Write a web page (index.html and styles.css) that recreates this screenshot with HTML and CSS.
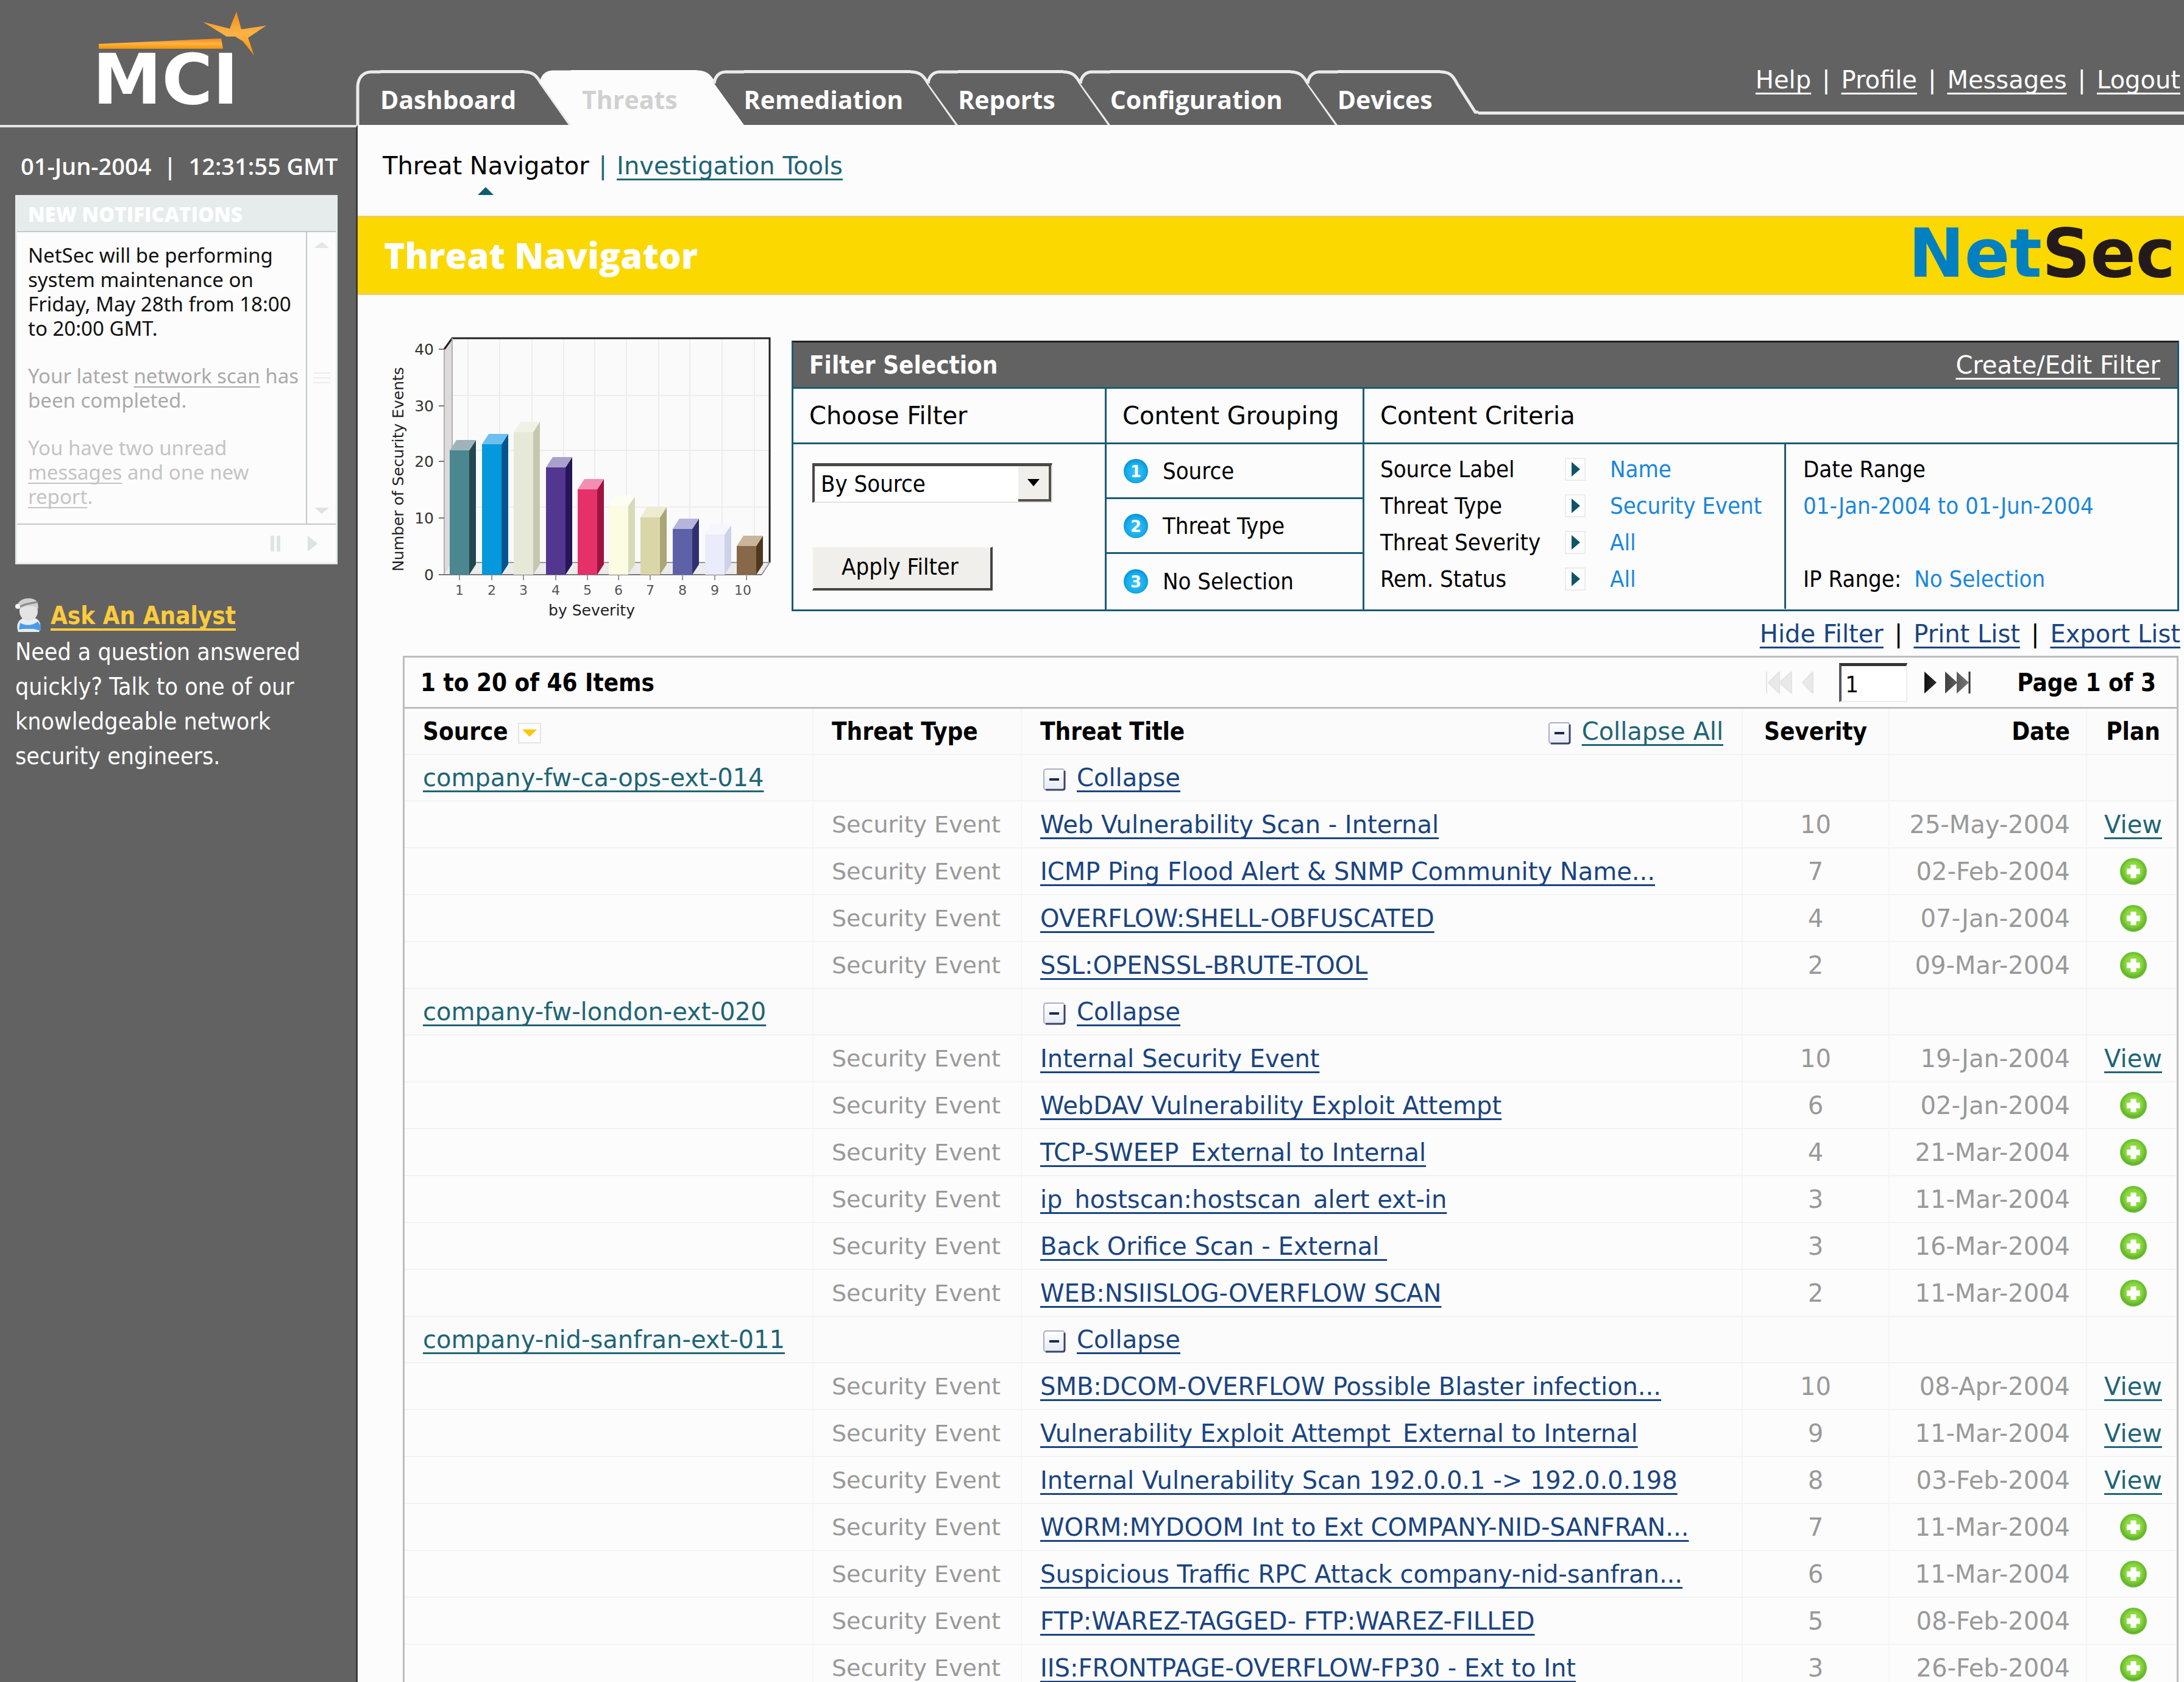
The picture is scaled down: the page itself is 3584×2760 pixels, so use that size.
FILE: index.html
```html
<!DOCTYPE html>
<html lang="en">
<head>
  <meta charset="UTF-8">
  <meta name="viewport" content="width=device-width, initial-scale=1.0">
  <title>Threat Navigator - NetSec</title>
  <link rel="stylesheet" href="styles.css">
</head>

<body>

  <!-- shared icons -->
  <svg class="sprite" width="0" height="0" aria-hidden="true">
    <defs>
      <linearGradient id="gold" x1="0" y1="0" x2="0" y2="1">
        <stop offset="0" stop-color="#f08a10"/>
        <stop offset="0.5" stop-color="#ffb347"/>
        <stop offset="1" stop-color="#f79400"/>
      </linearGradient>
      <linearGradient id="box" x1="0" y1="0" x2="0" y2="1">
        <stop offset="0" stop-color="#ffffff"/>
        <stop offset="1" stop-color="#e6eaf5"/>
      </linearGradient>
      <radialGradient id="green" cx="0.5" cy="0.45" r="0.55">
        <stop offset="0" stop-color="#a8e85a"/>
        <stop offset="0.6" stop-color="#86d63a"/>
        <stop offset="1" stop-color="#58a828"/>
      </radialGradient>
      <radialGradient id="blue" cx="0.5" cy="0.55" r="0.55">
        <stop offset="0" stop-color="#3fc4f5"/>
        <stop offset="0.7" stop-color="#14acec"/>
        <stop offset="1" stop-color="#0a8fd0"/>
      </radialGradient>
      <linearGradient id="dark" x1="0" y1="0" x2="1" y2="0">
        <stop offset="0" stop-color="#111"/>
        <stop offset="1" stop-color="#777"/>
      </linearGradient>
    </defs>
    <symbol id="tab-left" viewBox="0 0 52 90">
      <path class="tab-fill" d="M3 22C4 12 10 3 22 3H52V90Z"/>
      <path class="tab-line" d="M3 22C4 12 10 3 22 3H52"/>
    </symbol>
    <symbol id="tab-right" viewBox="0 0 77 90">
      <path class="tab-fill" d="M0 3C14 3 20 8 28 22L76 90H0Z"/>
      <path class="tab-line" d="M0 3C14 3 20 8 28 22L76 90"/>
    </symbol>
    <symbol id="minus" viewBox="0 0 38 38">
      <rect x="2" y="2" width="34" height="34" rx="4" fill="url(#box)" stroke="#a9aec4" stroke-width="2"/>
      <path d="M36 5V33Q36 36 33 36H5" fill="none" stroke="#3a4468" stroke-width="3"/>
      <path d="M11 19H27" stroke="#1b2a55" stroke-width="4"/>
    </symbol>
    <symbol id="plus" viewBox="0 0 44 44">
      <circle cx="22" cy="22" r="21" fill="url(#green)" stroke="#6cbf35" stroke-width="2"/>
      <path d="M22 11V33M11 22H33" stroke="#fff" stroke-width="9"/>
    </symbol>
    <symbol id="arrow" viewBox="0 0 34 38">
      <rect x="1" y="1" width="32" height="36" fill="#fdfdfd" stroke="#ececec" stroke-width="2"/>
      <path d="M11 7L25 19L11 31Z" fill="#0f5468"/>
    </symbol>
  </svg>

  <header class="top">
    <a class="logo" href="#" aria-label="MCI home">
      <svg width="300" height="200" viewBox="150 0 300 200">
        <path d="M162 72L363 63L366 80H162Z" fill="url(#gold)"/>
        <path d="M388 19L396 48L437 42L407 62L417 91L399 68L386 60L372 60L333 36L377 47Z" fill="url(#gold)"/>
        <text class="logo-text" x="152" y="170">MCI</text>
      </svg>
    </a>
    <nav class="tabs">
      <a class="tab first" href="#">
        <svg width="40" height="90" viewBox="0 0 40 90"><path class="tab-line" d="M3 90V26C4 12 12 3 26 3H40"/></svg>
        <span class="tab-label">Dashboard</span>
        <svg width="77" height="90"><use href="#tab-right"/></svg>
      </a>
      <a class="tab active" href="#">
        <svg width="52" height="90"><use href="#tab-left"/></svg>
        <span class="tab-label">Threats</span>
        <svg width="77" height="90"><use href="#tab-right"/></svg>
      </a>
      <a class="tab" href="#">
        <svg width="52" height="90"><use href="#tab-left"/></svg>
        <span class="tab-label">Remediation</span>
        <svg width="77" height="90"><use href="#tab-right"/></svg>
      </a>
      <a class="tab" href="#">
        <svg width="52" height="90"><use href="#tab-left"/></svg>
        <span class="tab-label">Reports</span>
        <svg width="77" height="90"><use href="#tab-right"/></svg>
      </a>
      <a class="tab" href="#">
        <svg width="52" height="90"><use href="#tab-left"/></svg>
        <span class="tab-label">Configuration</span>
        <svg width="77" height="90"><use href="#tab-right"/></svg>
      </a>
      <a class="tab last" href="#">
        <svg width="52" height="90"><use href="#tab-left"/></svg>
        <span class="tab-label">Devices</span>
        <svg width="62" height="90" viewBox="0 0 62 90"><path class="tab-line" d="M0 3C14 3 20 8 27 22L57 69H62"/></svg>
      </a>
      <div class="user-links">
        <a href="#">Help</a><span>|</span><a href="#">Profile</a><span>|</span><a href="#">Messages</a><span>|</span><a href="#">Logout</a>
      </div>
    </nav>
  </header>

  <div class="page">

    <aside class="sidebar">
      <p class="clock"><span>01-Jun-2004</span><span>|</span><span>12:31:55 GMT</span></p>

      <section class="notes">
        <h2>NEW NOTIFICATIONS</h2>
        <div class="notes-body">
          <div class="notes-text">
            <p class="fresh">NetSec will be performing system maintenance on Friday, May 28th from 18:00 to&nbsp;20:00 GMT.</p>
            <p>Your latest <a href="#">network scan</a> has been completed.</p>
            <p class="old">You have two unread <a href="#">messages</a> and one new <a href="#">report</a>.</p>
          </div>
          <div class="notes-scroll">
            <svg width="24" height="10" viewBox="0 0 24 10"><path d="M12 0L24 10H0Z" fill="#e2e6e6"/></svg>
            <svg width="28" height="18" viewBox="0 0 28 18"><path d="M0 1H28M0 9H28M0 17H28" stroke="#ececec" stroke-width="2"/></svg>
            <svg width="24" height="10" viewBox="0 0 24 10"><path d="M0 0H24L12 10Z" fill="#dde4e2"/></svg>
          </div>
        </div>
        <div class="notes-foot">
          <svg width="18" height="26" viewBox="0 0 18 26"><path d="M4 0V26M14 0V26" stroke="#dfe4e6" stroke-width="6"/></svg>
          <svg width="16" height="26" viewBox="0 0 16 26"><path d="M0 0L16 13L0 26Z" fill="#dbe3e3"/></svg>
        </div>
      </section>

      <section class="ask">
        <h2>
          <svg width="44" height="58" viewBox="0 0 44 58">
            <path d="M5 56C1 46 4 36 14 33H32C41 36 44 46 39 56Z" fill="#e8eef4"/>
            <path d="M8 41C16 46 28 46 37 39L42 46V54L30 51H12L6 52Z" fill="#4d9be8"/>
            <ellipse cx="22" cy="22" rx="15" ry="16" fill="#e4e4e2"/>
            <path d="M4 10C10 -2 32 -2 37 8L38 18C28 10 14 14 6 18Z" fill="#cfcfd0"/>
            <path d="M5 16C14 10 24 9 36 7" stroke="#8a8a8c" stroke-width="3" fill="none"/>
            <circle cx="4" cy="14" r="4" fill="#f4f4f4"/>
          </svg>
          <a href="#">Ask An Analyst</a>
        </h2>
        <p>Need a question answered quickly? Talk to one of our knowledgeable network security engineers.</p>
      </section>
    </aside>

    <main class="main">
      <nav class="subnav">
        <a class="current" href="#">Threat Navigator</a><span>|</span><a href="#">Investigation Tools</a>
      </nav>

      <div class="banner">
        <h1>Threat Navigator</h1>
        <div class="netsec"><span>Net</span>Sec</div>
      </div>

      <div class="overview">
        <svg class="chart" width="659" height="480" viewBox="640 540 659 480" role="img" aria-label="Number of Security Events by Severity">
          <path d="M742 555H1263V923H742Z" fill="#fafafa"/>
          <path d="M729 573L742 555V923L729 943Z" fill="#dcdadb"/>
          <path d="M729 943L742 923H1263L1250 943Z" fill="#ececec"/>
          <path d="M742 649H1263M742 739H1263M742 832H1263M768 555V923M820 555V923M873 555V923M925 555V923M976 555V923M1028 555V923M1081 555V923M1132 555V923M1185 555V923M1238 555V923" stroke="#ededed" stroke-width="2" fill="none"/>
          <path d="M729 573L742 555H1263V923" fill="none" stroke="#222" stroke-width="3"/>
          <path d="M1263 923H742M1263 923L1250 943" fill="none" stroke="#999" stroke-width="2"/>
          <path d="M742 555V923M729 573V943" stroke="#b5b0b2" stroke-width="2"/>
          <path d="M720 573H729M720 666H729M720 757H729M720 850H729M720 943H1250" stroke="#777" stroke-width="2"/>
          <path d="M754 943V952M807 943V952M859 943V952M912 943V952M964 943V952M1015 943V952M1067 943V952M1120 943V952M1173 943V952M1225 943V952" stroke="#999" stroke-width="2"/>

          <path d="M770 739L781 722V926L770 943Z" fill="#24474f"/><path d="M738 739L749 722H781L770 739Z" fill="#9fb4b8"/><path d="M738 739H770V943H738Z" fill="#4a8790"/>
          <path d="M823 729L834 712V926L823 943Z" fill="#03558f"/><path d="M791 729L802 712H834L823 729Z" fill="#6cc0ee"/><path d="M791 729H823V943H791Z" fill="#0698dc"/>
          <path d="M875 709L886 692V926L875 943Z" fill="#c6c8ae"/><path d="M843 709L854 692H886L875 709Z" fill="#f1f2e6"/><path d="M843 709H875V943H843Z" fill="#e7e9d8"/>
          <path d="M928 767L939 750V926L928 943Z" fill="#261558"/><path d="M896 767L907 750H939L928 767Z" fill="#a9a0cb"/><path d="M896 767H928V943H896Z" fill="#52368f"/>
          <path d="M980 803L991 786V926L980 943Z" fill="#a01340"/><path d="M948 803L959 786H991L980 803Z" fill="#f28fb0"/><path d="M948 803H980V943H948Z" fill="#e5316a"/>
          <path d="M1031 830L1042 815V926L1031 943Z" fill="#d9dab8"/><path d="M999 830L1010 813H1042L1031 830Z" fill="#fdfdf4"/><path d="M999 830H1031V943H999Z" fill="#fbfce2"/>
          <path d="M1083 849L1094 832V926L1083 943Z" fill="#a9a577"/><path d="M1051 849L1062 832H1094L1083 849Z" fill="#edecd0"/><path d="M1051 849H1083V943H1051Z" fill="#dad6a8"/>
          <path d="M1136 868L1147 851V926L1136 943Z" fill="#2f3070"/><path d="M1104 868L1115 851H1147L1136 868Z" fill="#b4b4dc"/><path d="M1104 868H1136V943H1104Z" fill="#5e61a8"/>
          <path d="M1189 877L1200 862V926L1189 943Z" fill="#cfd0ea"/><path d="M1157 877L1168 860H1200L1189 877Z" fill="#f6f6fe"/><path d="M1157 877H1189V943H1157Z" fill="#eaebfb"/>
          <path d="M1241 896L1252 879V926L1241 943Z" fill="#4d371f"/><path d="M1209 896L1220 879H1252L1241 896Z" fill="#c8b59a"/><path d="M1209 896H1241V943H1209Z" fill="#876848"/>

          <g class="axis-y">
            <text x="712" y="582">40</text><text x="712" y="675">30</text><text x="712" y="766">20</text><text x="712" y="859">10</text><text x="712" y="952">0</text>
          </g>
          <g class="axis-x">
            <text x="754" y="976">1</text><text x="807" y="976">2</text><text x="859" y="976">3</text><text x="912" y="976">4</text><text x="964" y="976">5</text>
            <text x="1015" y="976">6</text><text x="1067" y="976">7</text><text x="1120" y="976">8</text><text x="1173" y="976">9</text><text x="1219" y="976">10</text>
            <text class="axis-title" x="971" y="1010">by Severity</text>
            <text class="axis-title" transform="translate(662 770) rotate(-90)">Number of Security Events</text>
          </g>
        </svg>

        <section class="filter">
          <div class="filter-head">
            <h2>Filter Selection</h2>
            <a href="#">Create/Edit Filter</a>
          </div>
          <div class="filter-grid">
            <div class="col choose">
              <h3><label for="filter-by">Choose Filter</label></h3>
              <form class="choose-form">
                <div class="select-wrap">
                  <select id="filter-by"><option>By Source</option><option>By Severity</option></select>
                  <span class="select-arrow"><svg width="20" height="12" viewBox="0 0 20 12"><path d="M0 0H20L10 12Z"/></svg></span>
                </div>
                <button type="button">Apply Filter</button>
              </form>
            </div>
            <div class="col grouping">
              <h3>Content Grouping</h3>
              <ol>
                <li><span class="num"><svg width="40" height="40" viewBox="0 0 40 40"><circle cx="20" cy="20" r="20" fill="url(#blue)"/><text x="20" y="30">1</text></svg></span>Source</li>
                <li><span class="num"><svg width="40" height="40" viewBox="0 0 40 40"><circle cx="20" cy="20" r="20" fill="url(#blue)"/><text x="20" y="30">2</text></svg></span>Threat Type</li>
                <li><span class="num"><svg width="40" height="40" viewBox="0 0 40 40"><circle cx="20" cy="20" r="20" fill="url(#blue)"/><text x="20" y="30">3</text></svg></span>No Selection</li>
              </ol>
            </div>
            <div class="col criteria">
              <h3>Content Criteria</h3>
              <div class="criteria-body">
                <dl class="criteria-list">
                  <dt>Source Label</dt><dd><svg width="34" height="38"><use href="#arrow"/></svg>Name</dd>
                  <dt>Threat Type</dt><dd><svg width="34" height="38"><use href="#arrow"/></svg>Security Event</dd>
                  <dt>Threat Severity</dt><dd><svg width="34" height="38"><use href="#arrow"/></svg>All</dd>
                  <dt>Rem. Status</dt><dd><svg width="34" height="38"><use href="#arrow"/></svg>All</dd>
                </dl>
                <div class="ranges">
                  <div>Date Range<br><span class="value">01-Jan-2004 to 01-Jun-2004</span></div>
                  <div>IP Range: <span class="value">No Selection</span></div>
                </div>
              </div>
            </div>
          </div>
        </section>
      </div>

      <div class="actions">
        <a href="#">Hide Filter</a><span>|</span><a href="#">Print List</a><span>|</span><a href="#">Export List</a>
      </div>

      <section class="list">
        <div class="list-head">
          <h2>1 to 20 of 46 Items</h2>
          <div class="pager">
            <svg width="78" height="36" viewBox="0 0 78 36"><path d="M1 0V36M22 0L4 18L22 36ZM42 0L22 18L42 36ZM77 0L60 18L77 36Z" fill="#e9e9e9" stroke="#e4e4e4" stroke-width="2"/></svg>
            <input type="text" value="1" aria-label="Page number">
            <svg width="76" height="36" viewBox="0 0 76 36"><path d="M0 0L20 18L0 36ZM34 0L54 18L34 36ZM53 0L73 18L53 36Z" fill="url(#dark)"/><path d="M74 0V36" stroke="#333" stroke-width="3"/></svg>
            <strong>Page 1 of 3</strong>
          </div>
        </div>

        <table>
          <colgroup>
            <col class="c-source"><col class="c-type"><col><col class="c-severity"><col class="c-date"><col class="c-plan">
          </colgroup>
          <thead>
            <tr>
              <th>Source <svg class="sort" width="38" height="34" viewBox="0 0 38 34"><rect x="1" y="1" width="36" height="32" fill="#fdfdfd" stroke="#e4e6ee" stroke-width="2"/><path d="M7 11H31L19 23Z" fill="#fdc70c"/></svg></th>
              <th>Threat Type</th>
              <th><div class="title-head">Threat Title <span><svg width="38" height="38"><use href="#minus"/></svg><a class="teal" href="#">Collapse All</a></span></div></th>
              <th class="severity">Severity</th>
              <th class="date">Date</th>
              <th class="plan">Plan</th>
            </tr>
          </thead>
          <tbody>
            <tr class="group"><td><a class="teal" href="#">company-fw-ca-ops-ext-014</a></td><td></td><td><svg width="38" height="38"><use href="#minus"/></svg><a href="#">Collapse</a></td><td></td><td></td><td></td></tr>
            <tr><td></td><td class="type">Security Event</td><td><a href="#">Web Vulnerability Scan - Internal</a></td><td class="severity">10</td><td class="date">25-May-2004</td><td class="plan"><a class="teal" href="#">View</a></td></tr>
            <tr><td></td><td class="type">Security Event</td><td><a href="#">ICMP Ping Flood Alert &amp; SNMP Community Name...</a></td><td class="severity">7</td><td class="date">02-Feb-2004</td><td class="plan"><a href="#" aria-label="Add plan"><svg width="44" height="44"><use href="#plus"/></svg></a></td></tr>
            <tr><td></td><td class="type">Security Event</td><td><a href="#">OVERFLOW:SHELL-OBFUSCATED</a></td><td class="severity">4</td><td class="date">07-Jan-2004</td><td class="plan"><a href="#" aria-label="Add plan"><svg width="44" height="44"><use href="#plus"/></svg></a></td></tr>
            <tr><td></td><td class="type">Security Event</td><td><a href="#">SSL:OPENSSL-BRUTE-TOOL</a></td><td class="severity">2</td><td class="date">09-Mar-2004</td><td class="plan"><a href="#" aria-label="Add plan"><svg width="44" height="44"><use href="#plus"/></svg></a></td></tr>

            <tr class="group"><td><a class="teal" href="#">company-fw-london-ext-020</a></td><td></td><td><svg width="38" height="38"><use href="#minus"/></svg><a href="#">Collapse</a></td><td></td><td></td><td></td></tr>
            <tr><td></td><td class="type">Security Event</td><td><a href="#">Internal Security Event</a></td><td class="severity">10</td><td class="date">19-Jan-2004</td><td class="plan"><a class="teal" href="#">View</a></td></tr>
            <tr><td></td><td class="type">Security Event</td><td><a href="#">WebDAV Vulnerability Exploit Attempt</a></td><td class="severity">6</td><td class="date">02-Jan-2004</td><td class="plan"><a href="#" aria-label="Add plan"><svg width="44" height="44"><use href="#plus"/></svg></a></td></tr>
            <tr><td></td><td class="type">Security Event</td><td><a href="#">TCP-SWEEP_External to Internal</a></td><td class="severity">4</td><td class="date">21-Mar-2004</td><td class="plan"><a href="#" aria-label="Add plan"><svg width="44" height="44"><use href="#plus"/></svg></a></td></tr>
            <tr><td></td><td class="type">Security Event</td><td><a href="#">ip_hostscan:hostscan_alert ext-in</a></td><td class="severity">3</td><td class="date">11-Mar-2004</td><td class="plan"><a href="#" aria-label="Add plan"><svg width="44" height="44"><use href="#plus"/></svg></a></td></tr>
            <tr><td></td><td class="type">Security Event</td><td><a href="#">Back Orifice Scan - External&nbsp;</a></td><td class="severity">3</td><td class="date">16-Mar-2004</td><td class="plan"><a href="#" aria-label="Add plan"><svg width="44" height="44"><use href="#plus"/></svg></a></td></tr>
            <tr><td></td><td class="type">Security Event</td><td><a href="#">WEB:NSIISLOG-OVERFLOW SCAN</a></td><td class="severity">2</td><td class="date">11-Mar-2004</td><td class="plan"><a href="#" aria-label="Add plan"><svg width="44" height="44"><use href="#plus"/></svg></a></td></tr>

            <tr class="group"><td><a class="teal" href="#">company-nid-sanfran-ext-011</a></td><td></td><td><svg width="38" height="38"><use href="#minus"/></svg><a href="#">Collapse</a></td><td></td><td></td><td></td></tr>
            <tr><td></td><td class="type">Security Event</td><td><a href="#">SMB:DCOM-OVERFLOW Possible Blaster infection...</a></td><td class="severity">10</td><td class="date">08-Apr-2004</td><td class="plan"><a class="teal" href="#">View</a></td></tr>
            <tr><td></td><td class="type">Security Event</td><td><a href="#">Vulnerability Exploit Attempt_External to Internal</a></td><td class="severity">9</td><td class="date">11-Mar-2004</td><td class="plan"><a class="teal" href="#">View</a></td></tr>
            <tr><td></td><td class="type">Security Event</td><td><a href="#">Internal Vulnerability Scan 192.0.0.1 -&gt; 192.0.0.198</a></td><td class="severity">8</td><td class="date">03-Feb-2004</td><td class="plan"><a class="teal" href="#">View</a></td></tr>
            <tr><td></td><td class="type">Security Event</td><td><a href="#">WORM:MYDOOM Int to Ext COMPANY-NID-SANFRAN...</a></td><td class="severity">7</td><td class="date">11-Mar-2004</td><td class="plan"><a href="#" aria-label="Add plan"><svg width="44" height="44"><use href="#plus"/></svg></a></td></tr>
            <tr><td></td><td class="type">Security Event</td><td><a href="#">Suspicious Traffic RPC Attack company-nid-sanfran...</a></td><td class="severity">6</td><td class="date">11-Mar-2004</td><td class="plan"><a href="#" aria-label="Add plan"><svg width="44" height="44"><use href="#plus"/></svg></a></td></tr>
            <tr><td></td><td class="type">Security Event</td><td><a href="#">FTP:WAREZ-TAGGED- FTP:WAREZ-FILLED</a></td><td class="severity">5</td><td class="date">08-Feb-2004</td><td class="plan"><a href="#" aria-label="Add plan"><svg width="44" height="44"><use href="#plus"/></svg></a></td></tr>
            <tr><td></td><td class="type">Security Event</td><td><a href="#">IIS:FRONTPAGE-OVERFLOW-FP30 - Ext to Int</a></td><td class="severity">3</td><td class="date">26-Feb-2004</td><td class="plan"><a href="#" aria-label="Add plan"><svg width="44" height="44"><use href="#plus"/></svg></a></td></tr>
          </tbody>
        </table>
      </section>
    </main>
  </div>

</body>
</html>
```
FILE: styles.css
```css
* { box-sizing: border-box; }
html { background: #626262; }
body {
  margin: 0;
  height: 100vh;
  overflow: hidden;
  display: flex;
  flex-direction: column;
  font-family: "DejaVu Sans", Verdana, sans-serif;
  font-size: 40px;
  line-height: 48px;
  color: #000;
}
h1, h2, h3, p, ol, dl, dd { margin: 0; padding: 0; }
a {
  color: #1a4480;
  text-decoration-thickness: 3px;
  text-underline-offset: 7px;
  text-decoration-skip-ink: none;
}
a.teal { color: #1f6575; }
svg { display: block; flex: none; }
.sprite { position: absolute; }

/* header */
.top {
  display: flex;
  height: 205px;
  flex: none;
  background: #626262;
}
.logo {
  width: 584px;
  padding-left: 150px;
}
.logo-text {
  font-family: "DejaVu Sans", sans-serif;
  font-weight: 700;
  font-size: 114px;
  fill: #fff;
}
.tabs {
  flex: 1;
  display: flex;
  align-items: flex-end;
}
.tab {
  --fill: #626262;
  --line: #ebebeb;
  display: flex;
  height: 90px;
  margin-left: -52px;
  color: #fff;
  font-family: "Open Sans", "Noto Sans", sans-serif;
  font-weight: 700;
  font-size: 41px;
  text-decoration: none;
}
.tab-label {
  height: 90px;
  padding-right: 13px;
  border-top: 5px solid var(--line);
  line-height: 86px;
}
.tab-fill { fill: var(--fill); }
.tab-line { fill: none; stroke: var(--line); stroke-width: 5; }
.tab.first { margin-left: 0; }
.tab.active {
  --fill: #fcfcfc;
  --line: #fcfcfc;
  color: #d0d0d0;
}
.tab.active .tab-label {
  padding: 0 32px 0 18px;
  background: #fcfcfc;
}
.user-links {
  flex: 1;
  display: flex;
  justify-content: flex-end;
  gap: 18px;
  height: 81px;
  margin-bottom: 17px;
  padding-right: 6px;
  border-bottom: 5px solid #ebebeb;
  color: #fff;
}
.user-links a { color: #fff; }

.page {
  flex: 1;
  display: flex;
  min-height: 0;
}

/* sidebar */
.sidebar {
  width: 587px;
  flex: none;
  padding: 39px 30px 0 25px;
  background: #626262;
  border-top: 4px solid #e4e4e4;
  border-right: 3px solid #3c3c3c;
  color: #fff;
}
.clock {
  display: flex;
  gap: 20px;
  padding-left: 9px;
  font-family: "Open Sans", "Noto Sans", sans-serif;
  font-weight: 600;
  font-size: 38px;
  white-space: nowrap;
}
.notes {
  margin-top: 24px;
  background: #fcfcfc;
  border: 3px solid #e6ecec;
  font-family: "Noto Sans", "Open Sans", sans-serif;
  font-size: 33px;
  line-height: 40px;
}
.notes h2 {
  height: 58px;
  padding-left: 18px;
  background: #e6ecec;
  border-bottom: 2px solid #c4c8c8;
  color: #fff;
  font-family: "Open Sans", "Noto Sans", sans-serif;
  font-weight: 800;
  font-size: 33px;
  line-height: 58px;
}
.notes-body {
  display: flex;
  height: 480px;
  border-bottom: 2px solid #c4c8c8;
}
.notes-text {
  flex: 1;
  padding: 18px 0 0 18px;
  color: #aaa;
}
.notes-text p { margin-bottom: 38px; }
.notes-text a { color: inherit; text-decoration-thickness: 2px; text-underline-offset: 5px; }
.notes-text .fresh { color: #111; }
.notes-text .old { color: #c4c4c4; }
.notes-scroll {
  width: 49px;
  padding: 16px 0;
  display: flex;
  flex-direction: column;
  align-items: center;
  justify-content: space-between;
  border-left: 2px solid #c4c8c8;
}
.notes-foot {
  display: flex;
  justify-content: flex-end;
  align-items: center;
  gap: 44px;
  height: 62px;
  padding-right: 30px;
}
.ask {
  margin-top: 53px;
  font-family: "DejaVu Sans Condensed", Tahoma, sans-serif;
  font-size: 39px;
  line-height: 57px;
}
.ask h2 {
  display: flex;
  align-items: center;
  gap: 14px;
  font-size: 40px;
  line-height: 62px;
}
.ask a { color: #ffcb3c; text-decoration-thickness: 4px; }

/* content */
.main {
  flex: 1;
  min-width: 0;
  background: #fcfcfc;
}
.subnav {
  display: flex;
  gap: 16px;
  height: 149px;
  padding: 43px 0 0 41px;
}
.subnav a { color: #1f6575; }
.subnav span { color: #1f6575; }
.subnav .current {
  color: #000;
  text-decoration: none;
}
.subnav .current::after {
  content: "";
  display: block;
  width: 0;
  margin: 11px auto 0;
  border: 13px solid transparent;
  border-top: 0;
  border-bottom-color: #0f5b70;
}
.banner {
  display: flex;
  justify-content: space-between;
  align-items: center;
  height: 130px;
  padding: 0 14px 0 43px;
  background: #fad800;
  border-top: 3px solid #f2cc55;
  border-bottom: 3px solid #f2cc55;
}
.banner h1 {
  color: #fff;
  font-family: "Open Sans", "Noto Sans", sans-serif;
  font-weight: 800;
  font-size: 58px;
}
.netsec {
  padding-bottom: 6px;
  color: #241a1c;
  font-family: "DejaVu Sans", sans-serif;
  font-weight: 700;
  font-size: 110px;
  line-height: 110px;
}
.netsec span { color: #0080c0; }

/* fixed height: the links below sit level with the chart caption */
.overview {
  display: flex;
  align-items: flex-start;
  height: 532px;
  padding: 56px 8px 0 53px;
}
.filter {
  flex: 1;
  margin-top: 19px;
  border: 3px solid #1a5b75;
  border-top-color: #222;
  font-family: "DejaVu Sans Condensed", Tahoma, sans-serif;
  font-size: 38px;
}
.filter-head {
  display: flex;
  justify-content: space-between;
  align-items: center;
  height: 73px;
  padding: 0 28px 0 26px;
  background: #626262;
  font-family: "DejaVu Sans", Verdana, sans-serif;
}
.filter-head h2 {
  color: #fff;
  font-family: "DejaVu Sans Condensed", Tahoma, sans-serif;
  font-size: 40px;
}
.filter-head a { color: #fff; font-size: 40px; }
.filter-grid {
  display: grid;
  grid-template-columns: 511px 423px 1fr;
  border-top: 3px solid #1a5b75;
}
.col + .col { border-left: 3px solid #1a5b75; }
.col h3 {
  height: 91px;
  padding-left: 26px;
  border-bottom: 3px solid #1a5b75;
  font-family: "DejaVu Sans", Verdana, sans-serif;
  font-size: 40px;
  font-weight: 400;
  line-height: 88px;
  white-space: nowrap;
}
.choose-form {
  display: flex;
  flex-direction: column;
  align-items: flex-start;
  gap: 72px;
  padding: 31px;
}
.select-wrap {
  display: grid;
  grid-template-columns: 1fr 54px;
  width: 394px;
  height: 65px;
  background: #fff;
  border: 2px solid #e4e2dc;
  border-top: 5px solid #4a4846;
  border-left: 4px solid #4a4846;
}
.select-wrap select {
  grid-area: 1 / 1 / 2 / 3;
  appearance: none;
  padding: 0 10px;
  border: 0;
  background: none;
  color: #000;
  font: inherit;
}
.select-arrow {
  grid-area: 1 / 2;
  display: flex;
  align-items: center;
  justify-content: center;
  background: #f1efeb;
  border-right: 4px solid #55524e;
  border-bottom: 4px solid #55524e;
  pointer-events: none;
}
.choose-form button {
  width: 296px;
  height: 72px;
  padding: 0 6px 4px 0;
  background: #f1efeb;
  border: 2px solid #f6f5f2;
  border-right: 4px solid #444;
  border-bottom: 4px solid #444;
  color: #000;
  font: inherit;
}
.grouping ol { list-style: none; }
.grouping li {
  display: flex;
  align-items: center;
  gap: 24px;
  height: 90px;
  padding-left: 28px;
  border-bottom: 3px solid #1a5b75;
}
.grouping li:last-child { border-bottom: 0; }
.num text {
  fill: #fff;
  font-family: "DejaVu Sans", sans-serif;
  font-size: 26px;
  font-weight: 700;
  text-anchor: middle;
}
.criteria-body {
  display: grid;
  grid-template-columns: 689px 1fr;
  height: 270px;
}
.criteria-list {
  display: grid;
  grid-template-columns: 303px 1fr;
  grid-auto-rows: 60px;
  align-items: center;
  padding: 11px 0 0 26px;
  white-space: nowrap;
}
.criteria-list dd {
  display: flex;
  align-items: center;
  gap: 40px;
  color: #1a86dc;
}
.ranges {
  display: flex;
  flex-direction: column;
  gap: 60px;
  padding: 11px 0 0 28px;
  border-left: 3px solid #1a5b75;
  line-height: 60px;
}
.value { color: #1a86dc; }
.ranges div + div .value { margin-left: 10px; }

.actions {
  display: flex;
  justify-content: flex-end;
  gap: 18px;
  height: 60px;
  padding-right: 6px;
}

/* item list */
.list {
  margin: 0 9px 0 74px;
  border: 3px solid #bdbdbd;
}
.list-head {
  display: flex;
  justify-content: space-between;
  align-items: center;
  height: 84px;
  padding: 0 34px 0 26px;
  border-bottom: 3px solid #bdbdbd;
  font-family: "DejaVu Sans Condensed", Tahoma, sans-serif;
}
.list-head h2 { font-size: 40px; }
.pager {
  display: flex;
  align-items: center;
}
.pager input {
  width: 112px;
  height: 64px;
  margin: 0 28px 0 42px;
  padding: 4px 6px 0;
  background: #fff;
  border: 2px solid #ececec;
  border-top: 5px solid #333;
  border-left: 4px solid #555;
  font: inherit;
  font-size: 38px;
}
.pager strong { margin-left: 76px; }

table {
  width: 100%;
  table-layout: fixed;
  border-collapse: separate;
  border-spacing: 0;
}
.c-source { width: 671px; }
.c-type { width: 342px; }
.c-severity { width: 241px; }
.c-date { width: 324px; }
.c-plan { width: 147px; }
th, td {
  height: 77px;
  padding: 0 0 0 30px;
  border-right: 2px solid #f5f5f5;
  border-bottom: 2px solid #f3f3f3;
  text-align: left;
  white-space: nowrap;
}
th, .group td { height: 76px; background: #fbfbfb; }
th:last-child, td:last-child { border-right: 0; }
th {
  font-family: "DejaVu Sans Condensed", Tahoma, sans-serif;
  font-weight: 700;
  font-size: 40px;
}
td { color: #999; }
th svg, td svg { display: inline-block; vertical-align: middle; }
.sort { margin-left: 4px; }
.group td svg { margin-left: 4px; }
td svg + a, .title-head svg + a { margin-left: 18px; }
.title-head {
  display: flex;
  justify-content: space-between;
  padding-right: 30px;
}
.title-head a {
  font-family: "DejaVu Sans", Verdana, sans-serif;
  font-weight: 400;
}
.type { font-size: 38px; }
.severity { padding: 0; text-align: center; }
.date { padding: 0 26px 0 0; text-align: right; }
.plan { padding: 0 0 0 4px; text-align: center; }
.plan svg { display: block; margin: 0 auto; }

.axis-y text { font-size: 25px; text-anchor: end; fill: #333; }
.axis-x text { font-size: 22px; text-anchor: middle; fill: #555; }
.axis-x .axis-title { font-size: 25px; fill: #222; }
```
